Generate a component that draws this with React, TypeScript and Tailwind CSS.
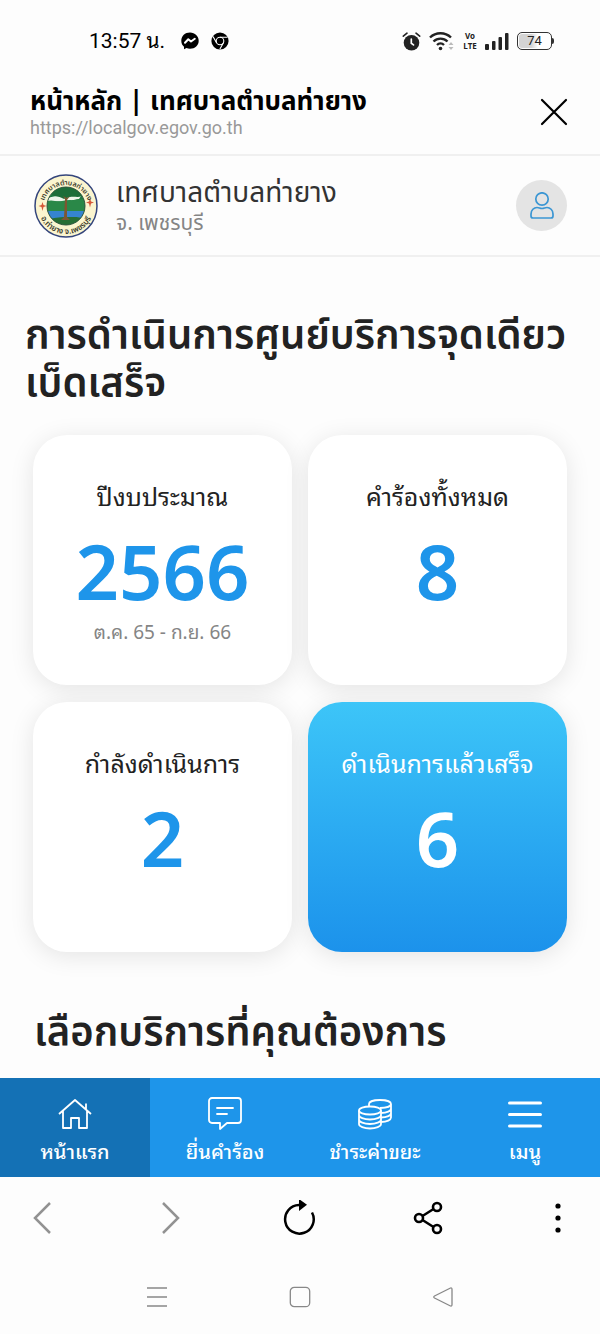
import type { ReactNode } from "react";
import clsx from "clsx";

type Stat = {
  label: string;
  value: number;
  note?: string;
  highlight?: boolean;
};

const STATS: Stat[] = [
  { label: "ปีงบประมาณ", value: 2566, note: "ต.ค. 65 - ก.ย. 66" },
  { label: "คำร้องทั้งหมด", value: 8 },
  { label: "กำลังดำเนินการ", value: 2 },
  { label: "ดำเนินการแล้วเสร็จ", value: 6, highlight: true },
];

function StatusBar() {
  return (
    <div className="flex h-[82px] items-center justify-between pr-[46px] pl-[89px] text-black">
      <div className="flex items-center gap-3">
        <span className="mr-1 font-['Roboto','Noto_Sans_Thai_Looped','Loma','Noto_Sans_Thai',sans-serif] text-[21px] leading-7">
          13:57 น.
        </span>
        <svg className="size-[18px]" viewBox="0 0 18 18">
          <path d="M9 .5C4 .5.3 4 .3 8.700c0 2.500 1 4.500 2.700 6v2.500l2.500-1.100c1 .4 2.200.6 3.500.6 5 0 8.700-3.500 8.700-8S14 .5 9 .5Z" fill="#000" />
          <path d="m4 10.800 3.300-3.500L10 9.500l3.800-2.700" fill="none" stroke="#fff" strokeWidth="2" strokeLinejoin="round" strokeLinecap="round" />
        </svg>
        <svg className="size-[18px]" viewBox="0 0 18 18">
          <circle cx="9" cy="9" r="8.600" fill="#000" />
          <g fill="none" stroke="#fff" strokeWidth="1.100">
            <circle cx="9" cy="9" r="3.800" />
            <path d="M9 5.200h7.600M5.700 10.900 2 4.400M12.300 10.900 8.800 17.300" />
          </g>
        </svg>
      </div>

      <div className="flex items-center gap-2 text-[#222]">
        <svg className="size-[19px]" viewBox="0 0 19 19">
          <circle cx="9.500" cy="10.700" r="7.800" fill="#222" />
          <path d="M1.300 4.200 5 1.200M17.700 4.200 14 1.200" stroke="#222" strokeWidth="1.600" strokeLinecap="round" />
          <path d="M9.300 7v4.300l2.200 1.600" fill="none" stroke="#fff" strokeWidth="1.700" strokeLinecap="round" />
        </svg>
        <svg className="h-5 w-[26px]" viewBox="0 0 26 20" fill="none" stroke="#222" strokeWidth="2.400">
          <path d="M1 6.500a15 15 0 0 1 21 0M4.500 10.500a10 10 0 0 1 14 0M8 14a5 5 0 0 1 7 0" />
          <circle cx="11.500" cy="17.500" r="1.800" fill="#222" stroke="none" />
          <path d="m19.500 14 2.500-3 2.500 3ZM19.500 16l2.500 3 2.500-3Z" fill="#bbb" stroke="none" />
        </svg>
        <div className="flex w-[14px] flex-col items-center font-['Open_Sans',sans-serif] text-[8px] leading-[10px] font-bold">
          <span>Vo</span>
          <span>LTE</span>
        </div>
        <svg className="h-[17px] w-6" viewBox="0 0 24 17" fill="#222">
          <rect x="0" y="11" width="4" height="6" rx="1" />
          <rect x="7" y="8" width="3.500" height="9" rx="1" />
          <rect x="13.500" y="4" width="3.500" height="13" rx="1" />
          <rect x="20" y="0" width="3.500" height="17" rx="1" />
        </svg>
        <div className="flex items-center">
          <span className="flex h-[18px] w-[35px] items-center justify-center rounded-[5px] border border-[#333] bg-linear-to-r from-[#d4d4d4] from-40% to-white to-60% font-['Roboto',sans-serif] text-[13px] leading-4 ring-1 ring-white ring-inset">
            74
          </span>
          <span className="h-1.5 w-0.5 rounded-r bg-[#333]" />
        </div>
      </div>
    </div>
  );
}

function TitleBar() {
  return (
    <div className="flex h-[74px] items-center justify-between border-b-2 border-[#f0f0f0] pr-8 pb-3 pl-[30px]">
      <div>
        <h1 className="text-[26px] leading-8 font-bold text-black">หน้าหลัก | เทศบาลตำบลท่ายาง</h1>
        <p className="font-['Roboto',sans-serif] text-lg leading-5 text-[#999]">
          https://localgov.egov.go.th
        </p>
      </div>
      <button type="button" aria-label="ปิด">
        <svg className="size-7" viewBox="0 0 28 28" stroke="#000" strokeWidth="2.200" strokeLinecap="round">
          <path d="m2 2 24 24M26 2 2 26" />
        </svg>
      </button>
    </div>
  );
}

function TownSeal() {
  return (
    <svg className="size-16 shrink-0" viewBox="0 0 64 64">
      <defs>
        <clipPath id="scene">
          <circle cx="32" cy="32" r="19" />
        </clipPath>
        <path id="arc-top" d="M9 34a23 23 0 0 1 46 0" />
        <path id="arc-bottom" d="M4 32a28 28 0 0 0 56 0" />
      </defs>
      <circle cx="32" cy="32" r="31" fill="#fbf5cf" stroke="#34457c" strokeWidth="1.500" />
      <g clipPath="url(#scene)">
        <path d="M12 12h40v40H12Z" fill="#207a43" />
        <path d="M13 26c3-4 6-3 9-4 4-1 7 2 11 0 4-3 9-4 14 0l-2 3c-4 0-6 2-9 1-6 2-14 1-23 1Z" fill="#edf4ea" />
        <path d="M12 28c6-4 10 1 16-1s12 1 24-3v14H12Z" fill="#2a8848" />
        <path d="M12 37h40v8H12Z" fill="#3584cf" />
        <path d="M12 46c8-2 12-3 20-3s14-1 20 3v8H12Z" fill="#276f35" />
        <path d="M18 21c1-6 7-8 14-8s16 3 16 9c-4 2-8 0-12 1s-5 3-8 1-7-1-10-3Z" fill="#1d6d39" />
        <path d="m29 22 2 3-1 18-3 3h9l-3-3V26l3-4-3 2Z" fill="#7d5631" />
      </g>
      <circle cx="32" cy="32" r="19" fill="none" stroke="#345942" strokeWidth="1" />
      <path d="m8.500 28 1 3 3 1-3 1-1 4-1-4-3-1 3-1ZM56 24l1 3.500 3 1-3 1-1 4-1-4-3-1 3-1Z" fill="#d65839" />
      <g fill="#3c3c2c" fontSize="7" fontWeight="600" textAnchor="middle">
        <text>
          <textPath href="#arc-top" startOffset="50%">เทศบาลตำบลท่ายาง</textPath>
        </text>
        <text fontSize="8">
          <textPath href="#arc-bottom" startOffset="50%">อ.ท่ายาง จ.เพชรบุรี</textPath>
        </text>
      </g>
    </svg>
  );
}

function SiteHeader() {
  return (
    <header className="flex h-[101px] items-center border-b-2 border-[#f0f0f0] pr-[33px] pl-[34px]">
      <TownSeal />
      <div className="ml-[18px] flex-1 pt-1">
        <p className="text-[28px] leading-8 text-[#333]">เทศบาลตำบลท่ายาง</p>
        <p className="text-[21px] leading-7 text-[#858585]">จ. เพชรบุรี</p>
      </div>
      <button
        type="button"
        aria-label="บัญชีผู้ใช้"
        className="flex size-[51px] items-center justify-center rounded-full bg-[#e4e4e4]"
      >
        <svg className="h-7 w-6" viewBox="0 0 24 28" fill="none" stroke="#3b96d3" strokeWidth="1.700">
          <circle cx="12" cy="7" r="6.200" />
          <path d="M1 24v-2c0-4 3-6.500 6-6.500 2 0 3 1 5 1s3-1 5-1c3 0 6 2.500 6 6.500v2c0 1.500-.7 2-2 2H3c-1.300 0-2-.5-2-2Z" />
        </svg>
      </button>
    </header>
  );
}

function StatCard({ label, value, note, highlight }: Stat) {
  return (
    <article
      className={clsx(
        "flex h-[250px] flex-col items-center rounded-[34px] pt-10 shadow-[0_4px_24px_rgba(0,0,0,0.1)]",
        highlight
          ? "bg-linear-to-b from-[#3dc5f8] to-[#1c92eb] text-white"
          : "bg-white text-[#222]"
      )}
    >
      <h3 className="font-['Noto_Sans_Thai_Looped','Loma','Noto_Sans_Thai',sans-serif] text-[25px] leading-10 whitespace-nowrap">
        {label}
      </h3>
      <p
        className={clsx(
          "mt-4 font-['Noto_Sans',sans-serif] text-[76px] leading-20 font-semibold",
          highlight ? "text-white" : "text-[#1e95ea]"
        )}
      >
        {value}
      </p>
      {note && (
        <p className="mt-1 font-['Noto_Sans_Thai_Looped','Loma','Noto_Sans_Thai',sans-serif] text-[19px] leading-8 text-[#858585]">
          {note}
        </p>
      )}
    </article>
  );
}

function NavItem({ label, active, children }: { label: string; active?: boolean; children: ReactNode }) {
  return (
    <a
      href="#"
      className={clsx(
        "flex flex-1 flex-col items-center gap-0.5 pt-[18px] text-white",
        active && "bg-[#1471b5]"
      )}
    >
      <svg className="size-9" viewBox="0 0 36 36" fill="none" stroke="currentColor" strokeWidth="1.800">
        {children}
      </svg>
      <span className="font-['Noto_Sans_Thai_Looped','Loma','Noto_Sans_Thai',sans-serif] text-xl leading-8 font-medium whitespace-nowrap">
        {label}
      </span>
    </a>
  );
}

function BottomNav() {
  return (
    <nav className="flex h-[99px] bg-[#1e95ea]">
      <NavItem label="หน้าแรก" active>
        <path d="M2 18 18 4l16 14M6 15v17h8V22h8v10h8V15M29 13V7.500" strokeLinejoin="round" />
      </NavItem>
      <NavItem label="ยื่นคำร้อง">
        <path d="M5 2h26a3 3 0 0 1 3 3v19a3 3 0 0 1-3 3H20l-7 6v-6H5a3 3 0 0 1-3-3V5a3 3 0 0 1 3-3Z" strokeLinejoin="round" />
        <path d="M10 12h16M10 18h10" strokeLinecap="round" />
      </NavItem>
      <NavItem label="ชำระค่าขยะ">
        <ellipse cx="13" cy="14.500" rx="11" ry="4" />
        <path d="M2 14.500V28c0 2.300 5 4.500 11 4.500S24 30.300 24 28V14.500M2 19c0 2.500 5 4.500 11 4.500S24 21.500 24 19M2 23.500C2 26 7 28 13 28s11-2 11-4.500" />
        <path d="M12 10.500V8c0-2.500 5-4 11-4s11 1.500 11 4-5 4-11 4M34 8v13.500c0 2.300-4 4.500-10 4.500M34 12.500c0 2.500-4 4.500-10 4.500M34 17c0 2.500-4 4.500-10 4.500" />
      </NavItem>
      <NavItem label="เมนู">
        <path d="M2.500 7h31M2.500 18.500h31M2.500 30h31" strokeWidth="3" strokeLinecap="round" />
      </NavItem>
    </nav>
  );
}

function BrowserBar() {
  return (
    <div className="flex h-[82px] items-center justify-between px-6 *:flex *:size-9 *:items-center *:justify-center">
      <button type="button" aria-label="ย้อนกลับ">
        <svg className="size-9" viewBox="0 0 36 36" fill="none" stroke="#929292" strokeWidth="2.500">
          <path d="M26 3 11 18l15 15" />
        </svg>
      </button>
      <button type="button" aria-label="ไปข้างหน้า">
        <svg className="size-9" viewBox="0 0 36 36" fill="none" stroke="#929292" strokeWidth="2.500">
          <path d="m10 3 15 15-15 15" />
        </svg>
      </button>
      <button type="button" aria-label="โหลดใหม่">
        <svg className="size-9" viewBox="0 0 36 36" fill="none" stroke="#000" strokeWidth="2.500">
          <path d="M30 12.500A14.300 14.300 0 1 1 17 5" />
          <path d="m17-1 8 5.800-8 6.200Z" fill="#000" stroke="none" />
        </svg>
      </button>
      <button type="button" aria-label="แชร์">
        <svg className="size-9" viewBox="0 0 36 36" fill="none" stroke="#000" strokeWidth="2.600">
          <circle cx="8" cy="18" r="4" />
          <circle cx="26" cy="7" r="4" />
          <circle cx="26" cy="29" r="4" />
          <path d="m11.500 16 11-7M11.500 20l11 7" />
        </svg>
      </button>
      <button type="button" aria-label="เพิ่มเติม">
        <svg className="size-9" viewBox="0 0 36 36">
          <circle cx="18" cy="6" r="2.600" />
          <circle cx="18" cy="18" r="2.600" />
          <circle cx="18" cy="30" r="2.600" />
        </svg>
      </button>
    </div>
  );
}

function SystemBar() {
  return (
    <div className="flex h-[76px] items-center justify-center gap-[121px] *:size-[22px]">
      <button type="button" aria-label="แอปล่าสุด">
        <svg viewBox="0 0 22 22" stroke="#888" strokeWidth="1.400">
          <path d="M1 2h20M1 11h20M1 20h20" />
        </svg>
      </button>
      <button type="button" aria-label="หน้าโฮม">
        <svg viewBox="0 0 22 22" fill="none" stroke="#888" strokeWidth="1.300">
          <rect x="1.300" y="1.300" width="19.400" height="19.400" rx="4" />
        </svg>
      </button>
      <button type="button" aria-label="กลับ">
        <svg viewBox="0 0 22 22" fill="none" stroke="#888" strokeWidth="1.300" strokeLinejoin="round">
          <path d="M18.500 2 2.500 10q-1.500 1 0 2l16 8q1.500.5 1.500-1.500v-15Q20 1.500 18.500 2Z" />
        </svg>
      </button>
    </div>
  );
}

export default function App() {
  return (
    <div className="flex min-h-screen flex-col bg-[#fdfdfd] font-['Noto_Sans_Thai','Noto_Sans',sans-serif]">
      <StatusBar />
      <TitleBar />
      <SiteHeader />

      <main className="flex-1 pb-5">
        <h2 className="px-[25px] pt-14 text-[40px] leading-12 font-semibold text-[#222]">
          การดำเนินการศูนย์บริการจุดเดียวเบ็ดเสร็จ
        </h2>
        <section className="grid grid-cols-2 gap-x-4 gap-y-[17px] px-[33px] pt-[26px]">
          {STATS.map((stat) => (
            <StatCard key={stat.label} {...stat} />
          ))}
        </section>
        <h2 className="px-[34px] pt-[58px] text-[40px] leading-12 font-semibold text-[#222]">
          เลือกบริการที่คุณต้องการ
        </h2>
      </main>

      <BottomNav />
      <BrowserBar />
      <SystemBar />
    </div>
  );
}
